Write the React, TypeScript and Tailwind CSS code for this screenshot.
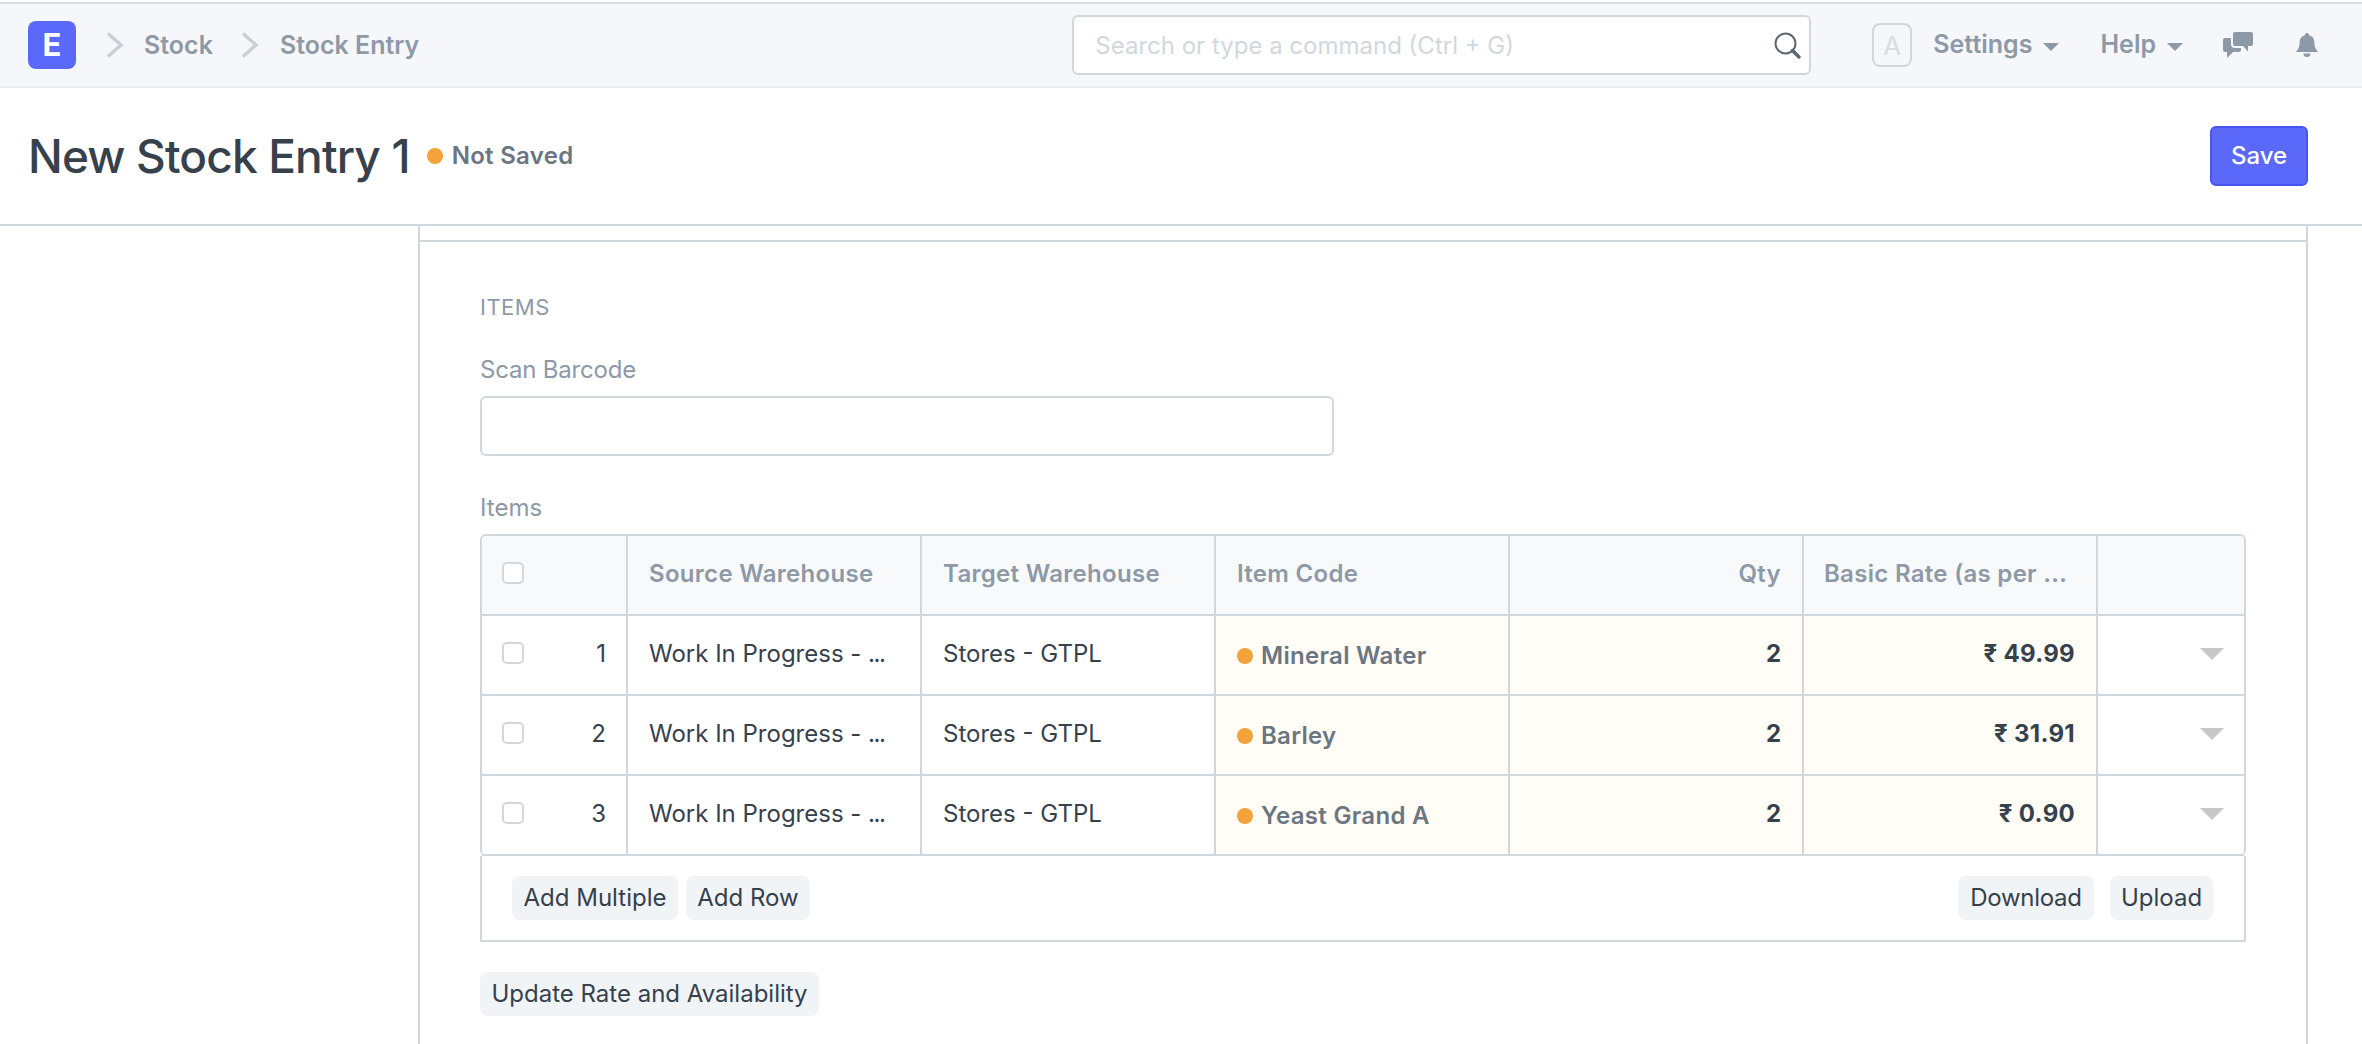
const rows = [
  { no: 1, code: 'Mineral Water', rate: '₹ 49.99' },
  { no: 2, code: 'Barley', rate: '₹ 31.91' },
  { no: 3, code: 'Yeast Grand A', rate: '₹ 0.90' },
]

function Chevron() {
  return (
    <svg width="18" height="26" viewBox="0 0 18 26" fill="none" stroke="#c8d0d6" strokeWidth="3.5">
      <path d="M2 1.5 L15 13 L2 24.5" />
    </svg>
  )
}

function Caret() {
  return <span className="inline-block w-0 h-0 border-x-[8px] border-x-transparent border-t-[8px] border-t-[#8d99a6]" />
}

function Checkbox() {
  return <span className="block w-[22px] h-[22px] rounded-[5px] border-2 border-[#d1d8dd] bg-white" />
}

function GrayButton({ label, width }: { label: string; width: string }) {
  return (
    <button className={`h-11 rounded-lg bg-[#f0f4f7] text-[#36414c] text-[24px] leading-none whitespace-nowrap ${width}`}>
      {label}
    </button>
  )
}

export default function App() {
  return (
    <div className="w-[2362px] h-[1044px] overflow-hidden bg-white font-['Inter',sans-serif] pt-0.5">
      {/* Navbar */}
      <div className="h-[86px] flex items-center bg-[#f5f7fa] border-y-2 border-t-[#d8dde1] border-b-[#e9edf0] pl-[28px]">
        <div className="w-12 h-12 rounded-lg bg-[#5a69fa] flex items-center justify-center text-white text-[31px] font-bold">
          E
        </div>
        <div className="flex items-center ml-[30px] text-[25px] font-semibold text-[#8d99a6]">
          <Chevron />
          <span className="ml-[20px] pt-[1px]">Stock</span>
          <span className="ml-[28px]"><Chevron /></span>
          <span className="ml-[21px] pt-[1px]">Stock Entry</span>
        </div>
        <div className="relative ml-[653px] w-[739px] h-[60px]">
          <input
            placeholder="Search or type a command (Ctrl + G)"
            className="w-full h-full pl-[21px] pr-12 rounded-md border-2 border-[#d1d8dd] bg-white text-[24px] placeholder:text-[#d1d8dd] outline-none"
          />
          <svg className="absolute right-[10px] top-[17px]" width="27" height="27" viewBox="0 0 27 27" fill="none" stroke="#5e6870">
            <circle cx="11.500" cy="11.500" r="10" strokeWidth="2" />
            <path d="M18.500 18.500 L25 25" strokeWidth="3.500" strokeLinecap="round" />
          </svg>
        </div>
        <div className="ml-[61px] w-10 h-11 rounded-lg border-2 border-[#d1d8dd] flex items-center justify-center text-[#d8dde1] text-[26px]">
          A
        </div>
        <span className="ml-[21px] text-[25px] font-semibold text-[#8d99a6]">Settings</span>
        <span className="ml-[11px]"><Caret /></span>
        <span className="ml-[41px] text-[25px] font-semibold text-[#8d99a6]">Help</span>
        <span className="ml-[11px]"><Caret /></span>
        <svg className="ml-[40px]" width="31" height="26" viewBox="0 0 31 26" fill="#8d99a6">
          <path d="M12 0h16a2 2 0 0 1 2 2v10a2 2 0 0 1-2 2h-3v5.500l-5-5.500h-8a2 2 0 0 1-2-2V2a2 2 0 0 1 2-2z" />
          <path d="M2 6h6v6a4 4 0 0 0 4 4h6v2a2 2 0 0 1-2 2H10l-6 6v-6H2a2 2 0 0 1-2-2V8a2 2 0 0 1 2-2z" />
        </svg>
        <svg className="ml-[42px]" width="22" height="25" viewBox="0 0 22 25" fill="#8d99a6">
          <path d="M11 0a2 2 0 0 1 2 2.200c3.600.8 5.400 3.600 5.400 7.300 0 4.700 1.200 6.300 3.600 9.500H0c2.400-3.200 3.600-4.800 3.600-9.500 0-3.700 1.800-6.500 5.400-7.300A2 2 0 0 1 11 0z" />
          <path d="M7.500 20.500h7a3.500 3.500 0 0 1-7 0z" />
        </svg>
      </div>

      {/* Page head */}
      <div className="h-[138px] flex items-center border-b-2 border-[#d1d8dd] pl-[28px] pr-[54px]">
        <h1 className="text-[46px] font-medium text-[#36414c] leading-none tracking-[-0.85px]">New Stock Entry 1</h1>
        <span className="ml-[17px] w-4 h-4 rounded-full bg-[#f4a23b]" />
        <span className="ml-[9px] text-[24px] font-semibold text-[#6c7680] tracking-[0.3px]">Not Saved</span>
        <button className="ml-auto w-[98px] h-[60px] rounded-md border-2 border-[#4654f0] bg-[#5a69fa] text-white text-[24px] font-medium">
          Save
        </button>
      </div>

      {/* Form card */}
      <div className="ml-[418px] w-[1890px] h-[900px] border-x-2 border-[#d1d8dd]">
        <div className="h-4 border-b-2 border-[#d1d8dd]" />
        <div className="px-[60px]">
          <div className="mt-[49px] text-[22px] leading-8 text-[#8d99a6] tracking-[0.5px]">ITEMS</div>
          <label className="block mt-[31px] text-[24px] leading-8 text-[#8d99a6] tracking-[-0.2px]">Scan Barcode</label>
          <input className="block mt-[10px] w-[854px] h-[60px] rounded-md border-2 border-[#d1d8dd] bg-white outline-none" />
          <label className="block mt-[36px] text-[24px] leading-8 text-[#8d99a6]">Items</label>

          {/* Items grid */}
          <div className="mt-[10px] rounded-md border-2 border-b-0 border-[#d1d8dd] text-[24px] text-[#36414c]">
            <div className="grid grid-cols-[146px_294px_294px_294px_294px_294px_146px] h-[80px] rounded-t-md bg-[#f8f9fb] border-b-2 border-[#d1d8dd] font-semibold text-[#8d99a6] tracking-[0.3px]">
              <div className="border-r-2 border-[#d1d8dd] pl-[20px] pb-[5px] flex items-center"><Checkbox /></div>
              <div className="border-r-2 border-[#d1d8dd] pl-[21px] pb-[2px] flex items-center">Source Warehouse</div>
              <div className="border-r-2 border-[#d1d8dd] pl-[21px] pb-[2px] flex items-center">Target Warehouse</div>
              <div className="border-r-2 border-[#d1d8dd] pl-[21px] pb-[2px] flex items-center">Item Code</div>
              <div className="border-r-2 border-[#d1d8dd] pr-[21px] pb-[2px] flex items-center justify-end">Qty</div>
              <div className="border-r-2 border-[#d1d8dd] pl-[20px] pb-[2px] flex items-center whitespace-pre">
                Basic Rate (as per ...
              </div>
              <div />
            </div>
            {rows.map((row) => (
              <div
                key={row.no}
                className="grid grid-cols-[146px_294px_294px_294px_294px_294px_146px] h-[80px] border-b-2 border-[#d1d8dd]"
              >
                <div className="relative border-r-2 border-[#d1d8dd] pl-[20px] pr-[20px] pb-[2px] flex items-center justify-between">
                  <span className="-mt-[3px]"><Checkbox /></span>
                  <span>{row.no}</span>
                </div>
                <div className="border-r-2 border-[#d1d8dd] pl-[21px] pb-[2px] flex items-center whitespace-pre">
                  Work In Progress - <span className="tracking-[-1.5px]">...</span>
                </div>
                <div className="border-r-2 border-[#d1d8dd] pl-[21px] pb-[2px] flex items-center">Stores - GTPL</div>
                <div className="border-r-2 border-[#d1d8dd] pl-[21px] pt-[1px] flex items-center bg-[#fffdf6] font-semibold text-[#6c7680] tracking-[0.3px]">
                  <span className="w-4 h-4 rounded-full bg-[#f4a23b] mr-2" />
                  {row.code}
                </div>
                <div className="border-r-2 border-[#d1d8dd] pr-[21px] pb-[2px] flex items-center justify-end bg-[#fffdf6] font-bold">
                  2
                </div>
                <div className="border-r-2 border-[#d1d8dd] pr-[21px] pb-[2px] flex items-center justify-end bg-[#fffdf6] font-bold tracking-[0.3px]">
                  {row.rate}
                </div>
                <div className="flex items-center justify-end pr-[20px] pb-[2px]">
                  <span className="w-0 h-0 border-x-[12px] border-x-transparent border-t-[12px] border-t-[#c8c8c8]" />
                </div>
              </div>
            ))}
          </div>
          <div className="h-[86px] flex items-start pt-[20px] pl-[30px] pr-[31px] gap-2 border-x-2 border-b-2 border-[#d1d8dd]">
            <GrayButton label="Add Multiple" width="w-[166px]" />
            <GrayButton label="Add Row" width="w-[124px]" />
            <div className="ml-auto flex gap-4">
              <GrayButton label="Download" width="w-[136px] tracking-[-0.3px]" />
              <GrayButton label="Upload" width="w-[103px]" />
            </div>
          </div>
          <div className="mt-[30px]">
            <GrayButton label="Update Rate and Availability" width="w-[339px]" />
          </div>
        </div>
      </div>
    </div>
  )
}
